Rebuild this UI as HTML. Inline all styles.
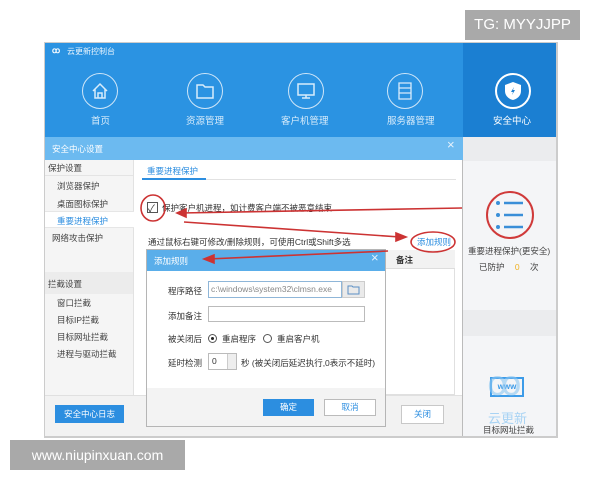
<!DOCTYPE html>
<html><head><meta charset="utf-8"><style>
*{margin:0;padding:0;box-sizing:border-box}
body{width:600px;height:480px;background:#fff;position:relative;overflow:hidden;font-family:"Liberation Sans","Noto Sans CJK SC",sans-serif;font-size:9px;color:#333}
.a{position:absolute}
.t{position:absolute;white-space:nowrap}
.nav{position:absolute;top:73px;width:36px;height:36px;border:1.5px solid #cfe6f8;border-radius:50%}
.nl{position:absolute;top:113px;color:#d8ecfb;font-size:9.5px;white-space:nowrap}
.si{position:absolute;left:57px;font-size:8.5px;color:#444;white-space:nowrap}
</style></head><body>
<div class="a" style="left:465px;top:10px;width:115px;height:30px;background:#a9a9a9;color:#fff;font-size:15px;line-height:30px;text-align:center">TG: MYYJJPP</div>

<!-- window shadow -->
<div class="a" style="left:44px;top:42px;width:514px;height:396px;background:#ccc"></div>
<!-- top bar -->
<div class="a" style="left:45px;top:43px;width:511px;height:94px;background:#2b93e2"></div>
<div class="a" style="left:463px;top:43px;width:93px;height:94px;background:#1b7fd2"></div>
<div class="t" style="left:52px;top:46px;color:#fff;font-size:8px;font-weight:bold">ꝏ</div>
<div class="t" style="left:67px;top:46px;color:#e8f4fd;font-size:8px">云更新控制台</div>
<div class="nav" style="left:82px"></div>
<svg class="a" style="left:90px;top:81px" width="20" height="20" viewBox="0 0 20 20" fill="none" stroke="#d8ecfb" stroke-width="1.5"><path d="M3 10 L10 3 L17 10 M5 8 V17 H15 V8 M8 17 V12 H12 V17"/></svg>
<div class="nl" style="left:91px">首页</div>
<div class="nav" style="left:187px"></div>
<svg class="a" style="left:195px;top:81px" width="20" height="20" fill="none" stroke="#d8ecfb" stroke-width="1.5"><path d="M2 4 H8 L10 6 H18 V17 H2 Z"/></svg>
<div class="nl" style="left:186px">资源管理</div>
<div class="nav" style="left:288px"></div>
<svg class="a" style="left:296px;top:81px" width="20" height="20" fill="none" stroke="#d8ecfb" stroke-width="1.5"><path d="M2 3 H18 V14 H2 Z M10 14 V17 M6 17 H14"/></svg>
<div class="nl" style="left:281px">客户机管理</div>
<div class="nav" style="left:387px"></div>
<svg class="a" style="left:395px;top:81px" width="20" height="20" fill="none" stroke="#d8ecfb" stroke-width="1.3"><path d="M4 2 H16 V18 H4 Z M4 7 H16 M4 12 H16"/></svg>
<div class="nl" style="left:387px">服务器管理</div>
<div class="nav" style="left:495px;border-color:#fff;border-width:2px"></div>
<svg class="a" style="left:502px;top:80px" width="22" height="22"><path d="M11 2 L19 5 V11 C19 16 15 19 11 20 C7 19 3 16 3 11 V5 Z" fill="#fff"/><path d="M12 7 L9 12 H11 L10 15 L13 10 H11 Z" fill="#1b7fd2"/></svg>
<div class="nl" style="left:493px;color:#fff">安全中心</div>

<!-- right panel -->
<div class="a" style="left:463px;top:137px;width:93px;height:299px;background:#f4f5f7"></div>
<div class="a" style="left:463px;top:137px;width:93px;height:24px;background:#ebecee"></div>
<div class="a" style="left:463px;top:310px;width:93px;height:26px;background:#ebecee"></div>
<svg class="a" style="left:485px;top:190px" width="50" height="50"><circle cx="25" cy="25" r="23" fill="none" stroke="#d03a3a" stroke-width="2"/><g stroke="#3a8fd8" stroke-width="2.5"><line x1="19" y1="13" x2="38" y2="13"/><line x1="19" y1="25" x2="38" y2="25"/><line x1="19" y1="37" x2="38" y2="37"/></g><g fill="#3a8fd8"><circle cx="13" cy="13" r="2"/><circle cx="13" cy="25" r="2"/><circle cx="13" cy="37" r="2"/></g></svg>
<div class="t" style="left:468px;top:245px;font-size:8.5px;color:#444">重要进程保护(更安全)</div>
<div class="t" style="left:479px;top:261px;font-size:8.5px;color:#444">已防护 <span style="color:#f0b020;margin:0 8px">0</span> 次</div>
<div class="t" style="left:490px;top:377px;width:34px;height:20px;border:2px solid #3c9be8;color:#3c9be8;font-size:8px;font-weight:bold;text-align:center;line-height:16px">www</div>
<div class="t" style="left:487px;top:364px;color:#8cc7f2;font-size:34px;opacity:.6">ꝏ</div>
<div class="t" style="left:488px;top:408px;color:#a8d3f4;font-size:13px">云更新</div>
<div class="t" style="left:483px;top:424px;font-size:8.5px;color:#444">目标网址拦截</div>

<!-- main dialog -->
<div class="a" style="left:45px;top:137px;width:418px;height:299px;background:#fff;border-right:1px solid #bbb"></div>
<div class="a" style="left:45px;top:137px;width:418px;height:23px;background:#6cbaf0"></div>
<div class="t" style="left:52px;top:143px;color:#fff;font-size:8.5px">安全中心设置</div>
<div class="t" style="left:447px;top:137px;color:#e5f2fc;font-size:13px">×</div>
<div class="a" style="left:45px;top:160px;width:89px;height:276px;background:#f5f5f5;border-right:1px solid #e2e2e2"></div>
<div class="a" style="left:45px;top:175px;width:88px;height:1px;background:#e4e4e4"></div>
<div class="t" style="left:48px;top:162px;font-size:8.5px;color:#444">保护设置</div>
<div class="si" style="top:180px">浏览器保护</div>
<div class="si" style="top:198px">桌面图标保护</div>
<div class="a" style="left:45px;top:211px;width:89px;height:17px;background:#fff;border-top:1px solid #e6e6e6;border-bottom:1px solid #e6e6e6"></div>
<div class="si" style="top:215px;color:#2c8ee0">重要进程保护</div>
<div class="si" style="top:232px;left:52px">网络攻击保护</div>
<div class="a" style="left:45px;top:272px;width:88px;height:22px;background:#ececec"></div>
<div class="t" style="left:48px;top:278px;font-size:8.5px;color:#444">拦截设置</div>
<div class="si" style="top:297px">窗口拦截</div>
<div class="si" style="top:314px">目标IP拦截</div>
<div class="si" style="top:331px">目标网址拦截</div>
<div class="si" style="top:348px">进程与驱动拦截</div>

<div class="t" style="left:147px;top:165px;color:#2c8ee0;font-size:8.5px">重要进程保护</div>
<div class="a" style="left:142px;top:178px;width:64px;height:2px;background:#2c8ee0"></div>
<div class="a" style="left:206px;top:179px;width:250px;height:1px;background:#e2e2e2"></div>
<div class="a" style="left:147px;top:202px;width:11px;height:11px;border:1px solid #555;background:#fff"></div>
<div class="t" style="left:148px;top:200px;font-size:10px;color:#333">✓</div>
<div class="t" style="left:162px;top:202px;font-size:8.5px;color:#333">保护客户机进程，如计费客户端不被恶意结束</div>
<div class="t" style="left:148px;top:236px;font-size:8.5px;color:#333">通过鼠标右键可修改/删除规则，可使用Ctrl或Shift多选</div>
<div class="t" style="left:417px;top:236px;font-size:8.5px;color:#2c8ee0">添加规则</div>
<div class="a" style="left:147px;top:250px;width:308px;height:145px;border:1px solid #e0e0e0"></div>
<div class="a" style="left:147px;top:250px;width:308px;height:19px;background:#f2f2f2;border-bottom:1px solid #ddd"></div>
<div class="t" style="left:396px;top:254px;font-size:8.5px;font-weight:bold;color:#333">备注</div>
<div class="a" style="left:45px;top:395px;width:417px;height:41px;background:#f2f2f2;border-top:1px solid #e0e0e0"></div>
<div class="a" style="left:55px;top:405px;width:69px;height:18px;background:#2c8ee0;color:#fff;font-size:8.5px;text-align:center;line-height:18px">安全中心日志</div>
<div class="a" style="left:401px;top:405px;width:43px;height:19px;border:1px solid #c8c8c8;background:#fff;color:#2c8ee0;font-size:8.5px;text-align:center;line-height:17px">关闭</div>

<!-- add rule dialog -->
<div class="a" style="left:146px;top:249px;width:240px;height:178px;background:#fff;border:1px solid #b5b5b5"></div>
<div class="a" style="left:147px;top:250px;width:238px;height:21px;background:#5aaeea"></div>
<div class="t" style="left:154px;top:255px;color:#fff;font-size:8.5px">添加规则</div>
<div class="t" style="left:371px;top:250px;color:#e5f2fc;font-size:13px">×</div>
<div class="t" style="left:168px;top:285px;font-size:8.5px">程序路径</div>
<div class="a" style="left:208px;top:281px;width:134px;height:17px;border:1px solid #8fb6d8;color:#888;font-size:8.5px;line-height:15px;padding-left:2px;white-space:nowrap;overflow:hidden">c:\windows\system32\clmsn.exe</div>
<div class="a" style="left:342px;top:281px;width:23px;height:17px;background:#eaeaea;border:1px solid #ccc"></div>
<svg class="a" style="left:347px;top:284px" width="14" height="11" fill="none" stroke="#5b8fc4" stroke-width="1"><path d="M1 2 H5 L6 3 H12 V10 H1 Z"/></svg>
<div class="t" style="left:168px;top:310px;font-size:8.5px">添加备注</div>
<div class="a" style="left:208px;top:306px;width:157px;height:16px;border:1px solid #bbb"></div>
<div class="t" style="left:168px;top:333px;font-size:8.5px">被关闭后</div>
<div class="a" style="left:208px;top:334px;width:9px;height:9px;border:1px solid #555;border-radius:50%"></div>
<div class="a" style="left:211px;top:337px;width:3px;height:3px;background:#222;border-radius:50%"></div>
<div class="t" style="left:222px;top:333px;font-size:8.5px">重启程序</div>
<div class="a" style="left:263px;top:334px;width:9px;height:9px;border:1px solid #555;border-radius:50%"></div>
<div class="t" style="left:277px;top:333px;font-size:8.5px">重启客户机</div>
<div class="t" style="left:168px;top:357px;font-size:8.5px">延时检测</div>
<div class="a" style="left:208px;top:353px;width:29px;height:17px;border:1px solid #bbb;font-size:8.5px;line-height:15px;padding-left:3px">0</div>
<div class="a" style="left:227px;top:354px;width:9px;height:15px;background:#eee;border-left:1px solid #ccc"></div>
<div class="t" style="left:241px;top:357px;font-size:8.5px">秒 (被关闭后延迟执行,0表示不延时)</div>
<div class="a" style="left:147px;top:388px;width:238px;height:38px;background:#f3f3f3"></div>
<div class="a" style="left:263px;top:399px;width:51px;height:17px;background:#2c8ee0;color:#fff;font-size:8.5px;text-align:center;line-height:17px">确定</div>
<div class="a" style="left:324px;top:399px;width:52px;height:17px;background:#fff;border:1px solid #bbb;color:#2c8ee0;font-size:8.5px;text-align:center;line-height:15px">取消</div>

<!-- red annotations -->
<svg class="a" style="left:0;top:0" width="600" height="480" fill="none" stroke="#cc3333" stroke-width="1.6">
<ellipse cx="153" cy="208" rx="12" ry="13"/>
<ellipse cx="433" cy="242" rx="22" ry="10"/>
<line x1="462" y1="208" x2="180" y2="213"/>
<path d="M186 209 L177 213 L186 217 Z" fill="#cc3333"/>
<line x1="184" y1="222" x2="400" y2="237"/>
<path d="M396 233 L406 237 L396 241 Z" fill="#cc3333"/>
<line x1="388" y1="251" x2="208" y2="259"/>
<path d="M214 255 L204 259 L214 263 Z" fill="#cc3333"/>
</svg>

<div class="a" style="left:10px;top:440px;width:175px;height:30px;background:#a9a9a9;color:#fff;font-size:14px;line-height:30px;text-align:center">www.niupinxuan.com</div>
</body></html>
